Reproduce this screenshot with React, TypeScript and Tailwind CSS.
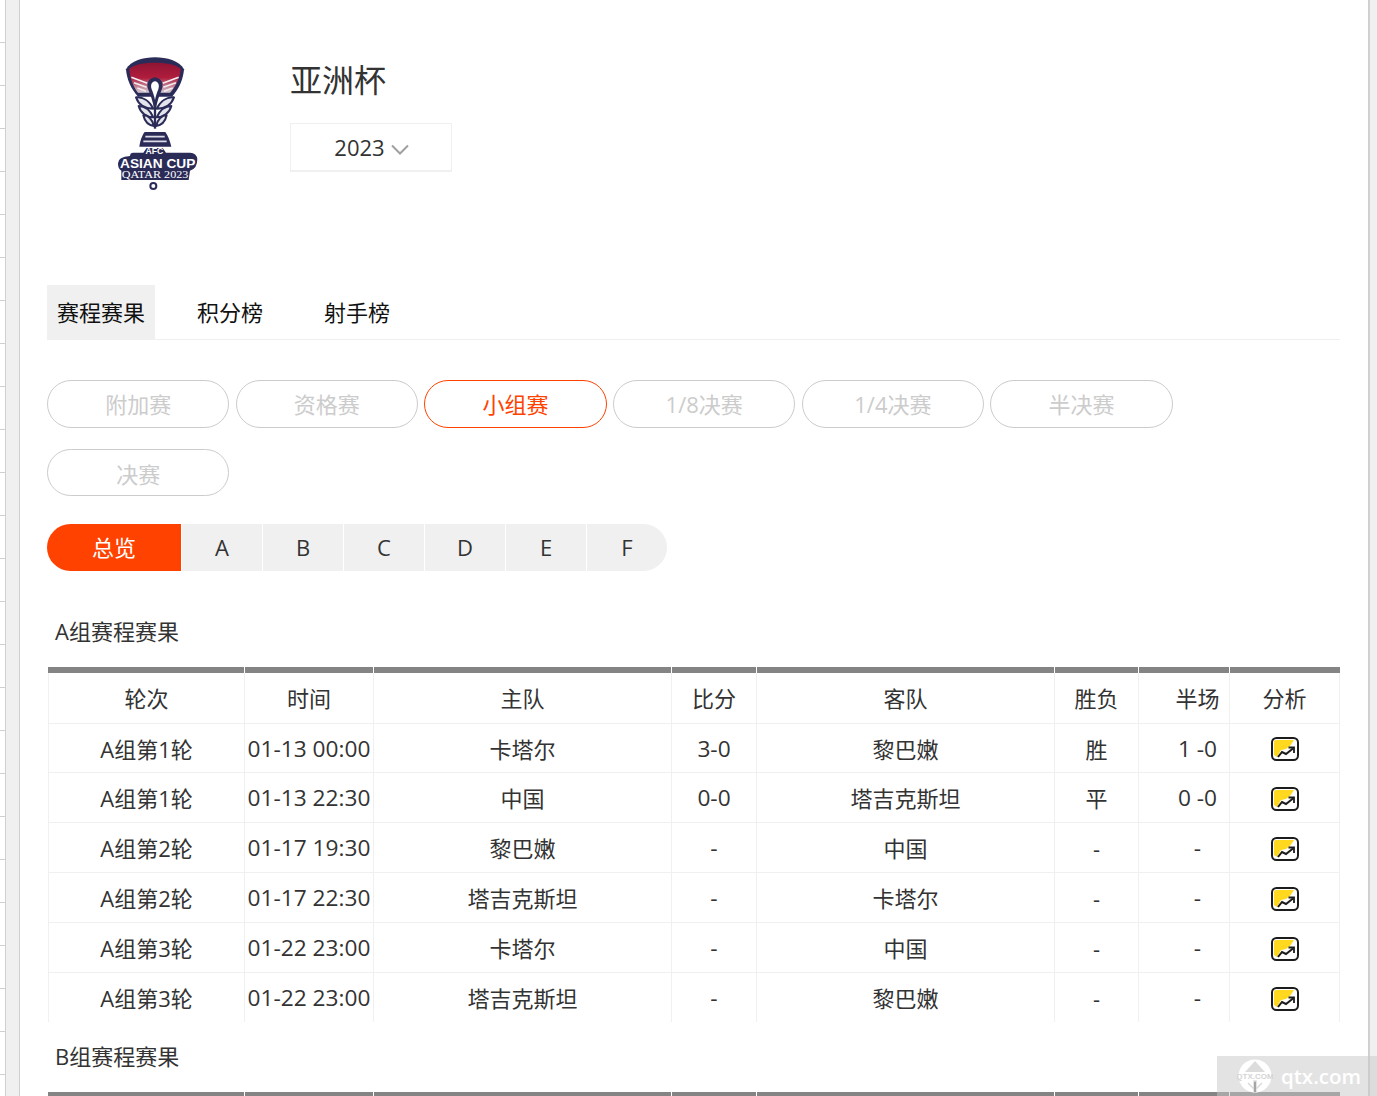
const stages = ['附加赛', '资格赛', '小组赛', '1/8决赛', '1/4决赛', '半决赛', '决赛'];
const groups = ['A', 'B', 'C', 'D', 'E', 'F'];
const columns = ['轮次', '时间', '主队', '比分', '客队', '胜负', '半场', '分析'];
const rows = [
  ['A组第1轮', '01-13 00:00', '卡塔尔', '3-0', '黎巴嫩', '胜', '1 -0'],
  ['A组第1轮', '01-13 22:30', '中国', '0-0', '塔吉克斯坦', '平', '0 -0'],
  ['A组第2轮', '01-17 19:30', '黎巴嫩', '-', '中国', '-', '-'],
  ['A组第2轮', '01-17 22:30', '塔吉克斯坦', '-', '卡塔尔', '-', '-'],
  ['A组第3轮', '01-22 23:00', '卡塔尔', '-', '中国', '-', '-'],
  ['A组第3轮', '01-22 23:00', '塔吉克斯坦', '-', '黎巴嫩', '-', '-'],
];
const gridCols = 'grid grid-cols-[196px_129px_298px_85px_298px_84px_91px_111px]';
const cellBase = 'flex items-center justify-center whitespace-nowrap border-l border-[#f0f0f0]';

function CupLogo() {
  return (
    <svg width="130" height="160" viewBox="0 0 390 480" className="block shrink-0">
      <defs>
        <linearGradient id="bowl" x1="0" y1="0" x2="0" y2="1">
          <stop offset="0" stopColor="#8f1434" />
          <stop offset="0.5" stopColor="#b01c3c" />
          <stop offset="1" stopColor="#d4ccd2" />
        </linearGradient>
      </defs>
      {/* bowl */}
      <path d="M108 88C122 62 160 52 195 52C230 52 268 62 282 88C280 116 268 146 246 170L144 170C122 146 110 116 108 88Z" fill="#2b2b58" />
      <path d="M118 86C136 72 165 68 195 68C225 68 254 72 272 86C270 112 258 138 240 158L144 158C128 138 120 112 118 86Z" fill="url(#bowl)" />
      <path d="M124 112L172 130M132 128L170 142M142 144L168 154M266 112L218 130M258 128L220 142M248 144L222 154" stroke="#f0eef2" strokeWidth="5" fill="none" />
      {/* keyhole */}
      <path d="M195 112C172 116 168 134 176 152C182 166 188 182 192 206L198 206C202 182 208 166 214 152C222 134 218 116 195 112Z" fill="#2b2b58" />
      <path d="M195 124C184 126 181 136 185 148C189 158 193 170 195 180C197 170 201 158 205 148C209 136 206 126 195 124Z" fill="#ffffff" />
      {/* leaves */}
      <g fill="#e4e4ec" stroke="#2b2b58" strokeWidth="6" strokeLinejoin="round">
        <path d="M138 172C158 170 178 182 190 206C166 206 146 194 138 172Z" />
        <path d="M252 172C232 170 212 182 200 206C224 206 244 194 252 172Z" />
        <path d="M146 198C164 198 180 210 190 232C170 232 152 220 146 198Z" />
        <path d="M244 198C226 198 210 210 200 232C220 232 238 220 244 198Z" />
        <path d="M160 226C174 226 186 238 192 258C176 256 164 244 160 226Z" />
        <path d="M230 226C216 226 204 238 198 258C214 256 226 244 230 226Z" />
      </g>
      <path d="M195 200V266" stroke="#2b2b58" strokeWidth="7" />
      {/* base */}
      <path d="M164 276H226C234 286 240 304 244 320H148C150 304 156 286 164 276Z" fill="#2b2b58" />
      <path d="M166 290H224M160 304H230" stroke="#dcdce6" strokeWidth="5" />
      <path d="M120 348Q120 338 130 338H160L170 324H218L228 338H300Q320 338 322 358Q322 386 300 392L296 420H94V392Q84 388 84 370Q84 350 120 348Z" fill="#2b2b58" />
      <g fontFamily="'Liberation Sans', sans-serif" textAnchor="middle" fill="#ffffff">
        <text x="193" y="343" fontSize="26" fontWeight="700">AFC</text>
        <text x="203" y="384" fontSize="41" fontWeight="700" textLength="226" lengthAdjust="spacingAndGlyphs">ASIAN CUP</text>
        <text x="195" y="415" fontFamily="'Liberation Serif', serif" fontSize="30" textLength="200" lengthAdjust="spacingAndGlyphs">QATAR 2023</text>
      </g>
      <circle cx="190" cy="438" r="9" fill="#ffffff" stroke="#2b2b58" strokeWidth="6" />
    </svg>
  );
}

function AnalysisIcon() {
  return (
    <svg width="28" height="24" viewBox="0 0 28 24" className="block">
      <path d="M3 5Q3 3 5 3H23L19 9L15 12L10 13L6 20L3 18Z" fill="#ffd81f" />
      <rect x="1" y="1" width="26" height="22" rx="4.5" fill="none" stroke="#1c1c1c" strokeWidth="2" />
      <path d="M7 20L11 15L15 17L22 11.5" fill="none" stroke="#1c1c1c" strokeWidth="2" />
      <path d="M17.5 10.5H23V16" fill="none" stroke="#1c1c1c" strokeWidth="1.8" />
    </svg>
  );
}

function ScheduleHead() {
  return (
    <div className={`${gridCols} ml-px w-[1292px]`}>
      {columns.map((c) => (
        <div key={c} className="h-[6px] border-l border-white bg-[#848484] first:border-l-0" />
      ))}
    </div>
  );
}

function ScheduleTable() {
  return (
    <div className="ml-px w-[1292px] text-[22px] text-[#333]">
      <div className="-ml-px">
        <ScheduleHead />
      </div>
      <div className={`${gridCols} h-[51px] border-b border-[#f0f0f0]`}>
        {columns.map((c, j) => (
          <div key={c} className={`${cellBase} last:border-r ${j === 6 ? 'pl-[27px]' : ''}`}>
            {c}
          </div>
        ))}
      </div>
      {rows.map((row, i) => (
        <div
          key={i}
          className={`${gridCols} ${i === 0 || i === rows.length - 1 ? 'h-[49px]' : 'h-[50px]'} ${
            i < rows.length - 1 ? 'border-b border-[#f0f0f0]' : ''
          }`}
        >
          {row.map((v, j) => (
            <div
              key={j}
              className={`${cellBase} pt-[2px] ${j === 1 || j === 3 || j === 6 ? 'text-[22.7px]' : ''} ${
                j === 6 ? 'pl-[27px]' : ''
              }`}
            >
              {v}
            </div>
          ))}
          <div className="flex items-center justify-center border-x border-[#f0f0f0] pt-[2px]">
            <AnalysisIcon />
          </div>
        </div>
      ))}
    </div>
  );
}

export default function App() {
  return (
    <div className="relative flex h-[1096px] overflow-hidden bg-white font-['Open_Sans','Noto_Sans_CJK_SC',sans-serif]">
      <div className="w-[5px] shrink-0">
        {Array.from({ length: 26 }).map((_, i) => (
          <div key={i} className="h-[43px] border-b border-[#d0d0d0]" />
        ))}
      </div>
      <div className="w-[15px] shrink-0 border-x border-[#d0d0d0] bg-[#f0f0f0]" />

      <main className="w-[1348px] shrink-0 pl-[27px]">
        <header className="flex h-[285px] pl-[43px] pt-[40px]">
          <CupLogo />
          <div className="ml-[70px]">
            <h1 className="text-[32px] leading-[80px] font-normal text-[#333]">亚洲杯</h1>
            <div className="mt-[3px] flex h-[49px] w-[162px] items-center justify-center border border-b-2 border-[#f0f0f0] pl-[2px] text-[22px] text-[#333]">
              <span>2023</span>
              <svg width="20" height="12" viewBox="0 0 20 12" className="ml-[5px] mt-[5px]">
                <path d="M2 1.5L10 9.5L18 1.5" fill="none" stroke="#a0a0a0" strokeWidth="2" />
              </svg>
            </div>
          </div>
        </header>

        <nav className="flex h-[55px] w-[1293px] items-stretch border-b border-[#f0f0f0] text-[22px] text-[#111]">
          <div className="flex w-[108px] items-center justify-center bg-[#f0f0f0]">赛程赛果</div>
          <div className="ml-[11px] flex items-center px-[31px]">积分榜</div>
          <div className="-ml-px flex items-center px-[31px]">射手榜</div>
        </nav>

        <div className="mt-[40px] flex w-[1293px] flex-wrap gap-x-[6.4px] gap-y-[21px]">
          {stages.map((s) => (
            <div
              key={s}
              className={`flex h-[48px] w-[182.3px] items-center justify-center rounded-full border text-[22px] last:h-[47px] last:pt-[3px] ${
                s === '小组赛' ? 'border-[#ff4200] text-[#ff4200]' : 'border-[#ccc] text-[#ccc]'
              }`}
            >
              {s}
            </div>
          ))}
        </div>

        <div className="mt-[28px] flex h-[47px] w-[620px] overflow-hidden rounded-full text-[22px] text-[#333]">
          <div className="flex w-[134px] items-center justify-center bg-[#ff4200] text-white">总览</div>
          {groups.map((g) => (
            <div key={g} className="ml-px flex flex-1 items-center justify-center bg-[#f0f0f0]">
              {g}
            </div>
          ))}
        </div>

        <h2 className="ml-[8px] mt-[41px] h-[55px] text-[22px] leading-[38px] font-normal text-[#333]">A组赛程赛果</h2>
        <ScheduleTable />
        <h2 className="ml-[8px] mt-[15px] h-[55px] text-[22px] leading-[38px] font-normal text-[#333]">B组赛程赛果</h2>
        <ScheduleHead />
      </main>

      <div className="flex-1 border-l-2 border-[#d0d0d0] bg-[#f0f0f0]" />

      <div className="absolute bottom-0 right-0 flex h-[40px] w-[160px] items-center bg-[#c8c8c8]/50 pl-[20px] text-white">
        <svg width="36" height="34" viewBox="0 0 36 34" className="shrink-0">
          <circle cx="18" cy="17" r="16.5" fill="#ffffff" />
          <path d="M18 2L8 13H28Z" fill="#dcdcdc" />
          <path d="M17 22H19V34H17ZM11 24L17 30M25 24L19 30" stroke="#dcdcdc" strokeWidth="1.5" />
          <text x="18" y="20" textAnchor="middle" fontSize="8" fontWeight="700" fill="#d4d4d4" fontFamily="'Liberation Sans', sans-serif">QTX.COM</text>
        </svg>
        <span className="ml-[8px] text-[20.5px] font-semibold leading-none">qtx.com</span>
      </div>
    </div>
  );
}
